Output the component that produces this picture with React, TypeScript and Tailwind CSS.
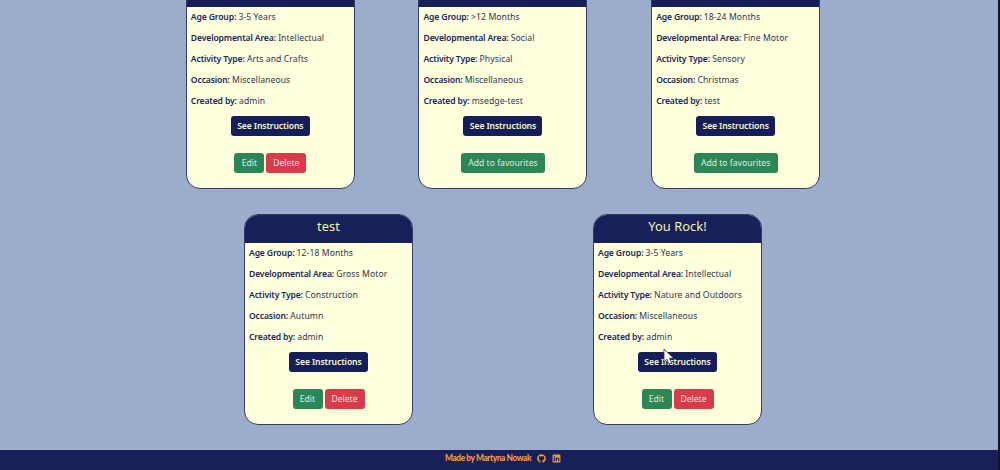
import { FaGithub, FaLinkedin } from "react-icons/fa";

type Activity = {
  title: string;
  age: string;
  area: string;
  type: string;
  occasion: string;
  author: string;
  own: boolean;
};

const upper: Activity[] = [
  { title: "", age: "3-5 Years", area: "Intellectual", type: "Arts and Crafts", occasion: "Miscellaneous", author: "admin", own: true },
  { title: "", age: ">12 Months", area: "Social", type: "Physical", occasion: "Miscellaneous", author: "msedge-test", own: false },
  { title: "", age: "18-24 Months", area: "Fine Motor", type: "Sensory", occasion: "Christmas", author: "test", own: false },
];

const lower: Activity[] = [
  { title: "test", age: "12-18 Months", area: "Gross Motor", type: "Construction", occasion: "Autumn", author: "admin", own: true },
  { title: "You Rock!", age: "3-5 Years", area: "Intellectual", type: "Nature and Outdoors", occasion: "Miscellaneous", author: "admin", own: true },
];

function Field({ label, value }: { label: string; value: string }) {
  return (
    <p className="h-[21px] whitespace-nowrap text-[8.6px] leading-[21px] text-[#303650]">
      <span className="font-semibold tracking-[-0.14px] text-[#20265c]">{label}:</span>{" "}
      <span className="tracking-[0.08px]">{value}</span>
    </p>
  );
}

function Card({ item }: { item: Activity }) {
  return (
    <article className="flex h-[211px] w-[169px] flex-col overflow-hidden rounded-[14px] border border-[#343b6b] bg-[#feffdc]">
      <h2 className="h-[28px] shrink-0 bg-[#172059] text-center text-[12.8px] leading-[22px] tracking-[0.1px] text-[#f4f5ac]">
        {item.title}
      </h2>
      <div className="pl-[4px]">
        <Field label="Age Group" value={item.age} />
        <Field label="Developmental Area" value={item.area} />
        <Field label="Activity Type" value={item.type} />
        <Field label="Occasion" value={item.occasion} />
        <Field label="Created by" value={item.author} />
      </div>
      <div className="mt-[4px] flex justify-center">
        <button className="h-[20px] w-[79px] whitespace-nowrap rounded-[3px] bg-[#151d5b] text-[8.6px] font-semibold leading-[21px] tracking-[-0.1px] text-[#f9fac3]">
          See Instructions
        </button>
      </div>
      <div className="mt-[17px] flex justify-center gap-[2px] text-[8.6px] leading-[20px] text-[#dceee2]">
        {item.own ? (
          <>
            <button className="h-[20px] w-[30px] rounded-[3px] bg-[#2b8755]">Edit</button>
            <button className="h-[20px] w-[40px] rounded-[3px] bg-[#d83c4a] text-[#fbdde0]">Delete</button>
          </>
        ) : (
          <button className="h-[20px] w-[84px] whitespace-nowrap rounded-[3px] bg-[#2b8755]">Add to favourites</button>
        )}
      </div>
    </article>
  );
}

export default function App() {
  return (
    <div className="relative flex h-[470px] w-[1000px] flex-col overflow-hidden border-r-2 border-[#10151f] bg-[#9cadcb] font-['Noto_Sans',sans-serif]">
      <main className="-mt-[22px] ml-[154px] flex h-[472px] w-[698px] shrink-0 flex-col gap-[25px]">
        <div className="flex justify-around">
          {upper.map((item, i) => <Card key={i} item={item} />)}
        </div>
        <div className="flex justify-around">
          {lower.map((item) => <Card key={item.title} item={item} />)}
        </div>
      </main>
      <footer className="flex h-[20px] shrink-0 items-start bg-[#172059] pl-[445px] text-[#f39a3b]">
        <span className="w-[87px] whitespace-nowrap font-['Lato',sans-serif] text-[8.4px] font-black leading-[17px] tracking-[-0.42px]">
          Made by Martyna Nowak
        </span>
        <FaGithub className="ml-[5px] mt-[4px] size-[9px]" />
        <FaLinkedin className="ml-[6px] mt-[4px] size-[9px]" />
      </footer>
      <svg className="absolute left-[663px] top-[348px] h-[18px] w-[12px]" viewBox="0 0 12 18">
        <path d="M1 1v13l3-2.7 2.1 4.7 2.5-1.1-2.1-4.6h4.1z" fill="#fff" stroke="#303444" strokeWidth=".8" />
      </svg>
    </div>
  );
}
